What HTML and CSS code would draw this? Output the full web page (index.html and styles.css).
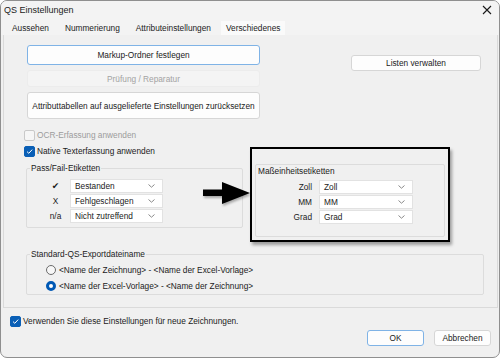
FILE: index.html
```html
<!DOCTYPE html>
<html>
<head>
  <link rel="stylesheet" href="styles.css">
</head>
<body>
  <div class="window">
    <div class="titlebar">
      <span class="title">QS Einstellungen</span>
      <svg class="close" width="10" height="10" viewBox="0 0 10 10"><path d="M1 1L9 9M9 1L1 9" stroke="#1a1a1a" stroke-width="1.1" fill="none"/></svg>
    </div>
    <div class="tabs">
      <span class="tab">Aussehen</span>
      <span class="tab">Nummerierung</span>
      <span class="tab">Attributeinstellungen</span>
      <span class="tab active">Verschiedenes</span>
    </div>
    <div class="panel">
      <div class="top-row">
        <div class="btn-col">
          <div class="btn default">Markup-Ordner festlegen</div>
          <div class="btn disabled">Prüfung / Reparatur</div>
          <div class="btn tall">Attributtabellen auf ausgelieferte Einstellungen zurücksetzen</div>
        </div>
        <div class="btn lists">Listen verwalten</div>
      </div>

      <div class="check off first">
        <span class="box"></span>OCR-Erfassung anwenden
      </div>
      <div class="check">
        <span class="box on"><svg width="9" height="9" viewBox="0 0 9 9"><path d="M2 4.6L3.8 6.3L7.2 2.6" stroke="#fff" stroke-width="1" fill="none"/></svg></span>Native Texterfassung anwenden
      </div>

      <div class="groups">
        <fieldset class="group passfail">
          <legend>Pass/Fail-Etiketten</legend>
          <div class="row">
            <span class="sym tick">✔</span>
            <div class="select"><span>Bestanden</span><svg width="7" height="4" viewBox="0 0 7 4"><path d="M0.5 0.5L3.5 3.2L6.5 0.5" stroke="#8a8a8a" fill="none"/></svg></div>
          </div>
          <div class="row">
            <span class="sym">X</span>
            <div class="select"><span>Fehlgeschlagen</span><svg width="7" height="4" viewBox="0 0 7 4"><path d="M0.5 0.5L3.5 3.2L6.5 0.5" stroke="#8a8a8a" fill="none"/></svg></div>
          </div>
          <div class="row">
            <span class="sym">n/a</span>
            <div class="select"><span>Nicht zutreffend</span><svg width="7" height="4" viewBox="0 0 7 4"><path d="M0.5 0.5L3.5 3.2L6.5 0.5" stroke="#8a8a8a" fill="none"/></svg></div>
          </div>
        </fieldset>

        <div class="group units">
          <div class="units-title">Maßeinheitsetiketten</div>
          <div class="row">
            <span class="unit">Zoll</span>
            <div class="select"><span>Zoll</span><svg width="7" height="4" viewBox="0 0 7 4"><path d="M0.5 0.5L3.5 3.2L6.5 0.5" stroke="#8a8a8a" fill="none"/></svg></div>
          </div>
          <div class="row">
            <span class="unit">MM</span>
            <div class="select"><span>MM</span><svg width="7" height="4" viewBox="0 0 7 4"><path d="M0.5 0.5L3.5 3.2L6.5 0.5" stroke="#8a8a8a" fill="none"/></svg></div>
          </div>
          <div class="row">
            <span class="unit">Grad</span>
            <div class="select"><span>Grad</span><svg width="7" height="4" viewBox="0 0 7 4"><path d="M0.5 0.5L3.5 3.2L6.5 0.5" stroke="#8a8a8a" fill="none"/></svg></div>
          </div>
        </div>
      </div>

      <fieldset class="group export">
        <legend>Standard-QS-Exportdateiname</legend>
        <div class="radio"><span class="dot"></span>&lt;Name der Zeichnung&gt; - &lt;Name der Excel-Vorlage&gt;</div>
        <div class="radio"><span class="dot on"></span>&lt;Name der Excel-Vorlage&gt; - &lt;Name der Zeichnung&gt;</div>
      </fieldset>
    </div>

    <div class="footer">
      <div class="check">
        <span class="box on"><svg width="9" height="9" viewBox="0 0 9 9"><path d="M2 4.6L3.8 6.3L7.2 2.6" stroke="#fff" stroke-width="1" fill="none"/></svg></span>Verwenden Sie diese Einstellungen für neue Zeichnungen.
      </div>
      <div class="actions">
        <div class="btn default ok">OK</div>
        <div class="btn cancel">Abbrechen</div>
      </div>
    </div>

    <!-- annotation drawn over the dialog -->
    <div class="highlight"></div>
    <svg class="arrow" width="50" height="26" viewBox="0 0 50 26">
      <path d="M0 8.5H19V1L47 12L19 23V15H0Z" fill="#000"/>
    </svg>
  </div>
</body>
</html>
```

FILE: styles.css
```css
* { box-sizing: border-box; }
body { margin: 0; background: #fff; font-family: "Liberation Sans", Arial, sans-serif; font-size: 8.3px; color: #1b1b1b; }

.window { position: relative; width: 500px; height: 358px; border: 1px solid #8f8f8f; border-radius: 7px; background: #f0f0f0; overflow: hidden; }

.titlebar { height: 19px; display: flex; align-items: center; justify-content: space-between; padding: 0 7px 1px 3px; background: #f3f3f3; }
.title { font-size: 9px; }
.close { display: block; }

.tabs { height: 15px; display: flex; align-items: stretch; gap: 4px; padding-left: 5px; background: #f3f3f3; }
.tab { display: flex; align-items: center; padding: 0 6px; }
.tab.active { background: #fafafa; margin-top: 1px; padding: 0 5px; }

.panel { height: 273px; margin: 0 1px 0 2px; border: 1px solid #dadada; border-top: none; padding: 10px 12px 0 20px; }

.top-row { display: flex; }
.btn-col { display: flex; flex-direction: column; gap: 5px; width: 233px; margin-left: 3px; }
.btn { display: flex; align-items: center; justify-content: center; background: #fdfdfd; border: 1px solid #d6d6d6; border-radius: 3px; }
.btn-col .btn { height: 20px; }
.btn.default { border-color: #7fb3e6; }
.btn-col .btn.disabled { height: 17px; background: #f4f4f4; border-color: #ececec; color: #a3a3a3; }
.btn-col .btn.tall { height: 27px; }
.btn.lists { width: 130px; height: 16px; margin: 10px 4px 0 auto; }

.check { display: flex; align-items: center; height: 16px; gap: 2px; }
.check.first { margin-top: 8px; }
.check.off { color: #9c9c9c; }
.box { width: 11px; height: 11px; border: 1px solid #c9c9c9; border-radius: 2px; background: #f6f6f6; display: flex; align-items: center; justify-content: center; }
.box.on { background: #0a5fb6; border-color: #0a5fb6; }
.box svg { display: block; }

.groups { display: flex; align-items: flex-start; gap: 12px; margin-top: 4px; margin-left: 2px; }
.group { margin: 0; border: 1px solid #dcdcdc; border-radius: 2px; padding: 0; }
.group legend { padding: 0 1px; margin-left: 3px; line-height: 10px; }
.group .row { display: flex; align-items: center; height: 15px; }

.passfail { width: 217px; padding: 5px 0 4px 0; }
.sym { width: 43px; text-align: center; padding-left: 14px; }
.sym.tick { font-family: "DejaVu Sans", sans-serif; font-size: 9px; }
.passfail .select { width: 93px; }

.units { width: 190px; padding: 0 0 12px 0; margin-top: 1px; }
.units-title { line-height: 10px; margin: 1px 0 3px 2px; }
.unit { width: 63px; text-align: right; padding-right: 7px; }
.units .select { width: 94px; }

.select { height: 14px; background: #fff; border: 1px solid #e2e2e2; display: flex; align-items: center; justify-content: space-between; padding: 0 7px 0 4px; }
.select svg { display: block; }

.export { margin: 12px 0 0 2px; width: 458px; padding: 3px 0 0 0; }
.radio { display: flex; align-items: center; height: 16px; padding-left: 19px; gap: 3px; }
.dot { width: 10px; height: 10px; border-radius: 50%; border: 1px solid #6b6b6b; background: #f7f7f7; }
.dot.on { border: 3px solid #0059b5; background: #fff; }

.footer { padding: 7px 8px 0 9px; }
.footer .check { height: 12px; }
.actions { display: flex; justify-content: flex-end; gap: 10px; margin-top: 3px; }
.actions .btn { width: 57px; height: 16px; }

.highlight { position: absolute; left: 249px; top: 146px; width: 200px; height: 95px; border: 2px solid #000; box-shadow: 2px 3px 3px rgba(0,0,0,0.35); }
.arrow { position: absolute; left: 202px; top: 180px; filter: drop-shadow(1px 2px 1px rgba(0,0,0,0.3)); }
```
